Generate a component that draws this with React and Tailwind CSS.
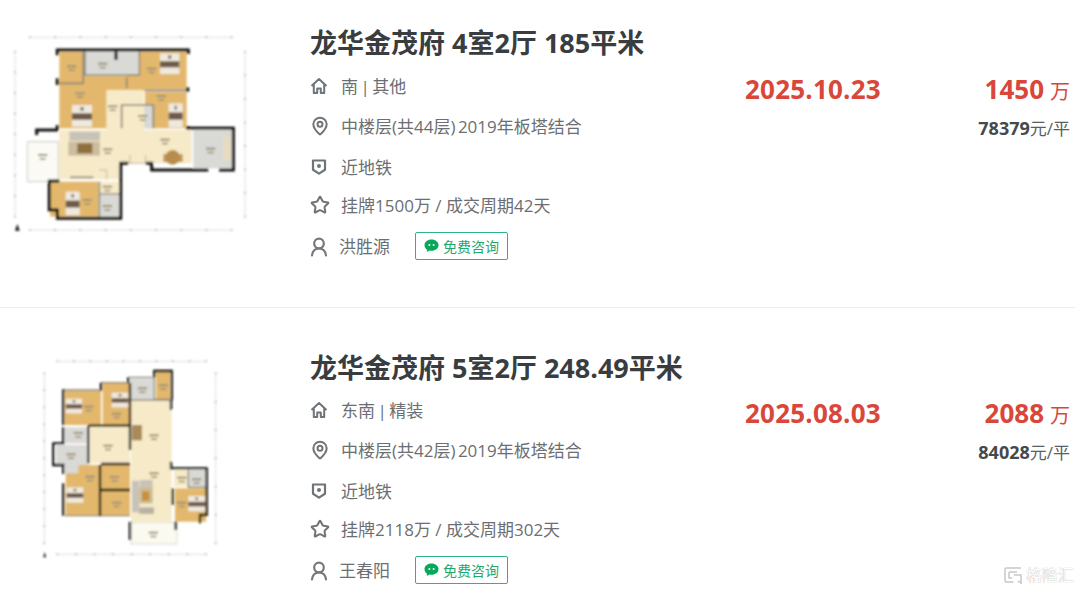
import { MapPin, Star } from "lucide-react";

const FONT = "[font-family:'Open_Sans','Noto_Sans_CJK_SC',sans-serif]";

const TAN = "#e3b86c";
const GRAY = "#d9d9d6";
const CREAM = "#f6eac8";

function Room({ r, fill }) {
    return <rect x={r[0]} y={r[1]} width={r[2] - r[0]} height={r[3] - r[1]} fill={fill} />;
}

function Bed({ x, y, w, h }) {
    return (
        <g>
            <rect x={x} y={y} width={w} height={h} fill="#efeadf" />
            <rect x={x} y={y + h * 0.38} width={w} height={h * 0.3} fill="#6e5a48" />
            <rect x={x + w * 0.42} y={y + h * 0.1} width={w * 0.16} height={h * 0.16} fill="#7a6a58" />
        </g>
    );
}

// small smudges where the plan has its unreadable room labels
function Label({ x, y }) {
    return (
        <g fill="#9c9076">
            <rect x={x - 14} y={y} width={28} height={6} />
            <rect x={x - 9} y={y + 12} width={18} height={5} />
        </g>
    );
}

function Ticks({ x1, y1, x2, y2, n }) {
    const ticks = [];
    for (let i = 0; i <= n; i++) {
        const px = x1 + ((x2 - x1) * i) / n;
        const py = y1 + ((y2 - y1) * i) / n;
        ticks.push(<circle key={i} cx={px} cy={py} r="3" fill="#b4b4b4" />);
    }
    return (
        <g>
            <line x1={x1} y1={y1} x2={x2} y2={y2} stroke="#d0d0d0" strokeWidth="2" />
            {ticks}
        </g>
    );
}

function PlanOne() {
    const tan = [[178, 95, 250, 190], [380, 165, 435, 215], [418, 95, 560, 208], [178, 172, 320, 325], [250, 168, 380, 210], [435, 215, 560, 325], [150, 485, 295, 590]];
    const gray = [[255, 95, 415, 165], [365, 255, 460, 325], [580, 330, 695, 445], [298, 525, 358, 590]];
    const cream = [[320, 210, 432, 330], [178, 330, 575, 430], [178, 430, 360, 478], [298, 485, 358, 520], [360, 430, 455, 432]];
    const walls = [
        "M172 106V90H565V102M563 202V215M563 318V325H700V450H657M625 450H455V430H437M385 430H362V595H172V570H148V483H178",
        "M175 330H110V345",
        "M172 175V195M172 315V330",
        "M348 95V120",
    ];
    const inner = [
        "M365 325V255H460V325",
        "M435 211H560M418 95V165H255V95M380 172V205",
        "M250 95V190M178 190H250",
        "M210 472H280",
        "M298 485V590M298 522H358",
    ];
    return (
        <svg width="270" height="230" viewBox="0 0 810 690" className="block">
            <g filter="url(#soft1)">
                <Ticks x1={90} y1={52} x2={695} y2={52} n={8} />
                <Ticks x1={90} y1={630} x2={695} y2={630} n={8} />
                <Ticks x1={45} y1={95} x2={45} y2={590} n={8} />
                <Ticks x1={735} y1={95} x2={735} y2={590} n={7} />
                {tan.map((r, i) => <Room key={i} r={r} fill={TAN} />)}
                {gray.map((r, i) => <Room key={i} r={r} fill={GRAY} />)}
                {cream.map((r, i) => <Room key={i} r={r} fill={CREAM} />)}
                <path d="M82 365H175V485H82Z" fill="#fbfaf4" stroke="#c9c9c4" strokeWidth="3" />
                <rect x="205" y="365" width="95" height="42" fill="#cbbd9f" />
                <rect x="208" y="335" width="92" height="27" fill="#c8c3b8" />
                <rect x="232" y="370" width="45" height="30" fill="#8d6f3c" />
                <rect x="490" y="402" width="58" height="24" fill="#c29a5c" />
                <circle cx="518" cy="412" r="22" fill="#b78c4e" />
                <Bed x={480} y={100} w={58} h={62} />
                <Bed x={216} y={255} w={60} h={65} />
                <Bed x={506} y={250} w={42} h={72} />
                <Bed x={197} y={515} w={42} h={70} />
                <rect x="670" y="350" width="22" height="70" fill="#e7dcc0" />
                <g stroke="#8a8578" strokeWidth="5" fill="none">
                    {inner.map((d, i) => <path key={i} d={d} />)}
                </g>
                <g stroke="#111" strokeWidth="9" fill="none">
                    {walls.map((d, i) => <path key={i} d={d} />)}
                </g>
                <path d="M390 405V430H437V405M320 478V450H298" fill="none" stroke="#a99" strokeWidth="2" />
                <Label x={215} y={136} />
                <Label x={308} y={128} />
                <Label x={455} y={143} />
                <Label x={240} y={217} />
                <Label x={484} y={225} />
                <Label x={338} y={256} />
                <Label x={428} y={285} />
                <Label x={323} y={385} />
                <Label x={495} y={356} />
                <Label x={128} y={402} />
                <Label x={632} y={383} />
                <Label x={262} y={537} />
                <Label x={322} y={497} />
                <Label x={322} y={555} />
                <path d="M52 612L45 632H59Z" fill="#111" />
            </g>
        </svg>
    );
}

function PlanTwo() {
    const tan = [[135, 122, 243, 225], [248, 98, 328, 225], [408, 65, 450, 148], [137, 345, 240, 495], [243, 345, 330, 418], [243, 422, 330, 495], [465, 415, 558, 515]];
    const gray = [[330, 85, 403, 148], [135, 232, 205, 280], [108, 285, 205, 345], [135, 345, 175, 370], [505, 360, 558, 412]];
    const cream = [[333, 150, 455, 515], [210, 230, 330, 340], [462, 360, 505, 410]];
    const walls = [
        "M130 225V118M243 98V122M325 100V82M403 82V63H455V150M453 150V180",
        "M453 335V355H560V495H540V520M467 515V540M330 515V570",
        "M130 497V400M130 372V345H100V280H130V232",
        "M240 345V497M243 342H330M243 420H330",
        "M205 227H330M205 227V340M330 100V300",
        "M458 415V465",
    ];
    const inner = [
        "M130 120H243M243 98H325M328 82H403",
        "M135 497H330",
        "M403 82V148H450M333 150H450M505 360V412H558",
    ];
    return (
        <svg width="210" height="220" viewBox="0 0 630 660" className="block">
            <g filter="url(#soft1)">
                <Ticks x1={112} y1={34} x2={558} y2={34} n={9} />
                <Ticks x1={112} y1={613} x2={558} y2={613} n={8} />
                <Ticks x1={73} y1={70} x2={73} y2={580} n={10} />
                <Ticks x1={587} y1={70} x2={587} y2={580} n={6} />
                {tan.map((r, i) => <Room key={i} r={r} fill={TAN} />)}
                {gray.map((r, i) => <Room key={i} r={r} fill={GRAY} />)}
                {cream.map((r, i) => <Room key={i} r={r} fill={CREAM} />)}
                <rect x="333" y="518" width="138" height="64" fill="#fbfaf0" stroke="#c9c9c4" strokeWidth="2" />
                <rect x="336" y="392" width="22" height="95" fill="#c8c3b8" />
                <rect x="360" y="390" width="38" height="20" fill="#c8c3b8" />
                <rect x="358" y="410" width="40" height="50" fill="#cdbb96" />
                <rect x="366" y="424" width="22" height="28" fill="#c8903a" />
                <rect x="358" y="472" width="44" height="20" fill="#b8b2a6" />
                <rect x="336" y="225" width="30" height="46" fill="#a98a58" />
                <Bed x={138} y={146} w={48} h={44} />
                <Bed x={275} y={128} w={50} h={44} />
                <Bed x={140} y={412} w={50} h={46} />
                <Bed x={505} y={438} w={50} h={46} />
                <g stroke="#8a8578" strokeWidth="4" fill="none">
                    {inner.map((d, i) => <path key={i} d={d} />)}
                </g>
                <g stroke="#111" strokeWidth="7" fill="none">
                    {walls.map((d, i) => <path key={i} d={d} />)}
                </g>
                <Label x={206} y={167} />
                <Label x={290} y={188} />
                <Label x={367} y={112} />
                <Label x={430} y={103} />
                <Label x={402} y={253} />
                <Label x={402} y={367} />
                <Label x={264} y={284} />
                <Label x={175} y={246} />
                <Label x={153} y={310} />
                <Label x={210} y={377} />
                <Label x={283} y={378} />
                <Label x={290} y={455} />
                <Label x={530} y={385} />
                <Label x={485} y={380} />
                <Label x={485} y={455} />
                <Label x={400} y={545} />
                <path d="M74 606L70 622H78Z" fill="#111" />
            </g>
        </svg>
    );
}

function HouseIcon() {
    return (
        <svg width="18" height="18" viewBox="0 0 18 18" fill="none" stroke="#6f7478" strokeWidth="2" strokeLinejoin="round">
            <path d="M1.5 9 9 2l7.5 7M3.8 7.500V16h3.400v-4.500h3.600V16h3.400V7.500" />
        </svg>
    );
}

function ShieldIcon() {
    return (
        <svg width="18" height="18" viewBox="0 0 18 18">
            <path d="M3 2.500h12v9.300L9 15.600 3 11.800Z" fill="none" stroke="#6f7478" strokeWidth="2.200" strokeLinejoin="round" />
            <circle cx="9" cy="8" r="2" fill="#6f7478" />
        </svg>
    );
}

function PersonIcon() {
    return (
        <svg width="18" height="20" viewBox="0 0 18 20" fill="none" stroke="#75797d" strokeWidth="2.200" strokeLinecap="round">
            <circle cx="9" cy="6.500" r="4.800" />
            <path d="M2 18.500c.5-4.500 3-7 7-7s6.500 2.500 7 7" />
        </svg>
    );
}

function ChatIcon() {
    return (
        <svg width="15" height="14" viewBox="0 0 15 14">
            <path d="M7.500 0.500C3.400 0.500 0.500 3 0.500 6.200c0 1.900 1 3.500 2.600 4.500L2.700 13l2.900-1.500c.6.100 1.200.2 1.900.2 4.100 0 7-2.400 7-5.500S11.600.5 7.500.5Z" fill="#07a85c" />
            <circle cx="5.400" cy="6" r="1" fill="#fff" />
            <circle cx="9.600" cy="6" r="1" fill="#fff" />
        </svg>
    );
}

function InfoRow({ icon, children, className = "" }) {
    return (
        <div className={`flex items-center h-[40px] text-[17px] text-[#6b6f73] ${className}`}>
            <span className="w-[31px] flex justify-start -mt-[2px]">{icon}</span>
            <span>{children}</span>
        </div>
    );
}

function Listing({ item, plan, planClass, infoClass, metaClass }) {
    return (
        <div className="flex h-[325px] border-b border-[#eeeeee] shrink-0">
            <div className={`w-[310px] shrink-0 ${planClass}`}>{plan}</div>
            <div className="w-[435px] shrink-0 pt-[38px]">
                <h2 className="text-[27px] leading-[44px] font-bold text-[#3a3d40] whitespace-nowrap">{item.title}</h2>
                <div className={infoClass}>
                    <InfoRow className="[word-spacing:-2px]" icon={<HouseIcon />}>{item.face}</InfoRow>
                    <InfoRow className="[word-spacing:-2px]" icon={<MapPin size={20} color="#6f7478" strokeWidth={2.4} />}>{item.floor}</InfoRow>
                    <InfoRow className="mt-[1px]" icon={<ShieldIcon />}>近地铁</InfoRow>
                    <InfoRow className="-mt-[2px]" icon={<Star size={20} color="#6f7478" strokeWidth={2.4} />}>{item.listing}</InfoRow>
                    <div className="flex items-center h-[40px] mt-[1px] text-[17px] text-[#6b6f73]">
                        <span className="w-[29px]"><PersonIcon /></span>
                        <span className="w-[76px]">{item.agent}</span>
                        <span className="flex items-center gap-[4px] h-[28px] -mt-[2px] px-[8px] rounded-[2px] border border-[#2fb383] text-[14px] text-[#1fa86c]">
                            <ChatIcon />
                            免费咨询
                        </span>
                    </div>
                </div>
            </div>
            <div className={`w-[190px] shrink-0 text-[26px] tracking-[0.2px] leading-[40px] font-bold text-[#d9473a] ${metaClass}`}>{item.date}</div>
            <div className={`w-[135px] shrink-0 text-right ${metaClass}`}>
                <div className="leading-[40px] text-[#d9473a]">
                    <span className="text-[26px] font-bold">{item.price}</span>
                    <span className="text-[20px] ml-[6px]">万</span>
                </div>
                <div className="text-[17px] leading-[40px] -mt-[5px] text-[#5a5e62] whitespace-nowrap">
                    <span className="text-[18px] font-bold text-[#45494d]">{item.unit}</span>元/平
                </div>
            </div>
        </div>
    );
}

const ITEMS = [
    {
        title: "龙华金茂府 4室2厅 185平米",
        face: "南 | 其他",
        floor: "中楼层(共44层) 2019年板塔结合",
        listing: "挂牌1500万 / 成交周期42天",
        agent: "洪胜源",
        date: "2025.10.23",
        price: "1450",
        unit: "78379",
    },
    {
        title: "龙华金茂府 5室2厅 248.49平米",
        face: "东南 | 精装",
        floor: "中楼层(共42层) 2019年板塔结合",
        listing: "挂牌2118万 / 成交周期302天",
        agent: "王春阳",
        date: "2025.08.03",
        price: "2088",
        unit: "84028",
    },
];

export default function App() {
    return (
        <div className={`relative w-[1080px] h-[594px] overflow-hidden bg-white ${FONT}`}>
            <svg width="0" height="0" className="absolute">
                <filter id="soft1"><feGaussianBlur stdDeviation="2.4" /></filter>
            </svg>
            <div className="flex flex-col -mt-[17px] w-[1075px]">
                <Listing item={ITEMS[0]} plan={<PlanOne />} planClass="pt-[37px]" infoClass="mt-[2px]" metaClass="pt-[86px]" />
                <Listing item={ITEMS[1]} plan={<PlanTwo />} planClass="pt-[42px] pl-[20px]" infoClass="mt-[1px]" metaClass="pt-[85px]" />
            </div>
            {/* watermark */}
            <div className="absolute right-[6px] bottom-[7px] flex items-center gap-[3px] text-[16px] text-white [text-shadow:0_0_1px_#9a9a9a]">
                <svg width="20" height="19" viewBox="0 0 20 19" fill="none" stroke="#c8c8c8" strokeWidth="1.500">
                    <path d="M18 2H3.500A1.500 1.500 0 0 0 2 3.500v11A1.500 1.500 0 0 0 3.500 16h7M6 6h8M6 6v6h3M11 9h7v8l-3-2" />
                </svg>
                <span>格隆汇</span>
            </div>
        </div>
    );
}
